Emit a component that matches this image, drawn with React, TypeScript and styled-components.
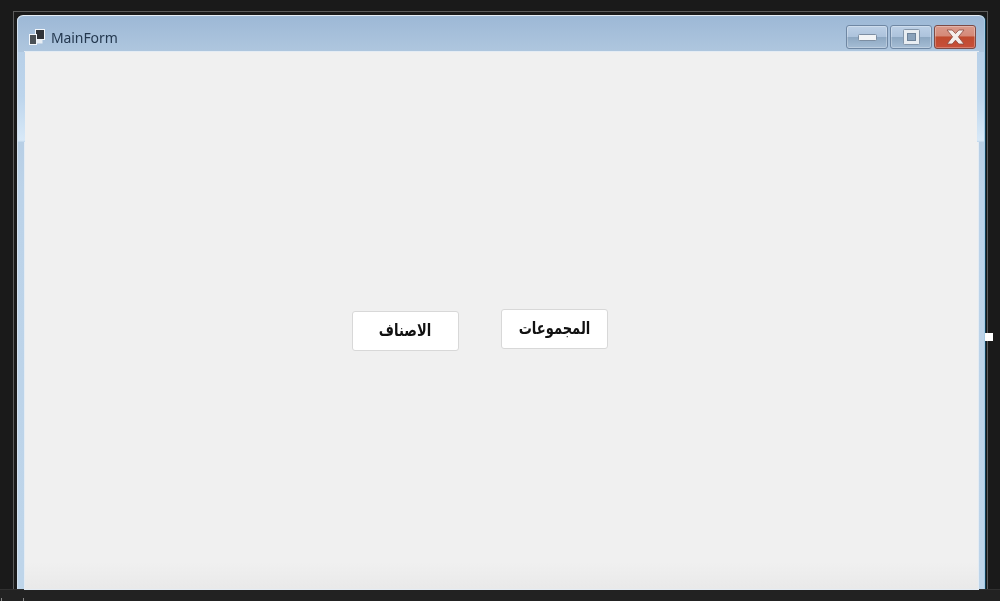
import React from 'react';
import styled, { createGlobalStyle } from 'styled-components';

const GlobalStyle = createGlobalStyle`
  html, body {
    margin: 0;
    padding: 0;
    background: #1a1a1a;
  }
  #root {
    width: 1000px;
    height: 601px;
  }
`;

const Stage = styled.div`
  position: relative;
  box-sizing: border-box;
  display: flex;
  flex-direction: column;
  width: 1000px;
  height: 601px;
  padding-top: 11px;
  background: #1a1a1a;
  overflow: hidden;
  filter: blur(0.35px);
`;

const DesignerOutline = styled.div`
  box-sizing: border-box;
  flex-shrink: 0;
  width: 975px;
  height: 578px;
  margin-left: 13px;
  padding: 3px 3px 0 3px;
  border: 1px solid #5c5c5c;
  border-bottom: none;
`;

const Window = styled.div`
  position: relative;
  box-sizing: border-box;
  display: flex;
  flex-direction: column;
  width: 968px;
  height: 574px;
  padding: 0 7px 0 8px;
  border-top: 1px solid #e6edf4;
  border-radius: 6px 6px 0 0;
  background: linear-gradient(180deg, #9db8d6 0%, #aec6de 6%, #bcd3e9 30%, #bed5ea 100%);
  box-shadow: inset 1px 0 0 #d3e1ef, inset -1px 0 0 #a8cbe4, 1px 0 0 #0d3c55;
`;

const SideGlow = styled.div<{ $side: 'left' | 'right' }>`
  position: absolute;
  top: 36px;
  ${props => props.$side}: 1px;
  width: 7px;
  height: 90px;
  background: linear-gradient(180deg, #b8d0e8 0%, #bdd5ec 50%, #d8e9f8 98%, #bed5ea 100%);
`;

const TitleBar = styled.div`
  display: flex;
  align-items: flex-start;
  justify-content: space-between;
  height: 36px;
  flex-shrink: 0;
`;

const TitleGroup = styled.div`
  display: flex;
  align-items: center;
  gap: 5px;
  padding: 10px 0 0 4px;
`;

const TitleText = styled.span`
  font-family: 'Noto Sans', sans-serif;
  font-size: 14px;
  letter-spacing: -0.1px;
  line-height: 23px;
  color: #24384f;
`;

const WindowButtons = styled.div`
  display: flex;
  gap: 2px;
  margin: 9px 2px 0 0;
`;

const CaptionButton = styled.div<{ $close?: boolean }>`
  box-sizing: border-box;
  display: flex;
  align-items: center;
  justify-content: center;
  width: 42px;
  height: 24px;
  border: 1px solid ${props => (props.$close ? '#7d4a45' : '#6f87a3')};
  border-radius: 3px;
  background: ${props =>
    props.$close
      ? 'linear-gradient(180deg, #d99a8c 0%, #d58a78 45%, #bf4a2e 50%, #c8503a 100%)'
      : 'linear-gradient(180deg, #bdd0e6 0%, #adc3dc 48%, #8ea8c2 52%, #a5bdd5 100%)'};
  box-shadow: inset 0 0 0 1px rgba(255, 255, 255, 0.28);
`;

const ClientArea = styled.div`
  flex: 1;
  display: flex;
  justify-content: center;
  align-items: flex-start;
  gap: 42px;
  padding: 257px 44px 0 0;
  background: linear-gradient(180deg, #f0f0f0 0%, #f0f0f0 95%, #e9e9e9 100%);
  box-shadow: 0 0 0 1px #e4ecf4;
`;

const FormButton = styled.button<{ $drop?: number }>`
  box-sizing: border-box;
  width: 107px;
  height: 40px;
  margin-top: ${props => props.$drop ?? 0}px;
  padding: 0 0 2px;
  border: 1px solid #d8d8d8;
  border-radius: 3px;
  background: #ffffff;
  font-family: 'DejaVu Sans', sans-serif;
  font-size: 17px;
  font-weight: 700;
  color: #111111;
`;

const ButtonLabel = styled.span`
  display: inline-block;
  transform: scaleX(0.77);
`;

const BottomStrip = styled.div`
  flex: 1;
  display: flex;
  align-items: flex-end;
  gap: 21px;
  padding-left: 1px;
  border-top: 1px solid #303030;
  background: #222222;
`;

const BottomTick = styled.div`
  width: 1px;
  height: 3px;
  background: #8a8a8a;
`;

const ResizeHandle = styled.div`
  position: absolute;
  left: 985px;
  top: 333px;
  width: 8px;
  height: 8px;
  background: #ffffff;
`;

const FormIcon = () => (
  <svg width="17" height="17" viewBox="0 0 17 17">
    <rect x="6.5" y="0.5" width="9" height="10" fill="#2f3338" stroke="#f2f6fa" />
    <rect x="0.5" y="5.5" width="7" height="10" fill="#4a5055" stroke="#f2f6fa" />
    <rect x="7.5" y="10.5" width="6" height="4" fill="#e8eef4" />
  </svg>
);

const MinimizeIcon = () => (
  <svg width="19" height="7" viewBox="0 0 19 7">
    <rect x="0.5" y="0.5" width="18" height="6" rx="1" fill="#f2f4f6" stroke="#7d8ea2" />
  </svg>
);

const MaximizeIcon = () => (
  <svg width="17" height="16" viewBox="0 0 17 16">
    <rect x="0.5" y="0.5" width="16" height="15" rx="1" fill="#e8edf2" stroke="#8496aa" />
    <rect x="4.5" y="4.5" width="8" height="7" fill="#8aa2bb" stroke="#6d8299" />
  </svg>
);

const CloseIcon = () => (
  <svg width="19" height="16" viewBox="0 0 19 16">
    <path
      d="M1 1h5.2l3.3 3.6L12.8 1H18l-5.6 6.8L18 15h-5.2l-3.3-3.8L6.2 15H1l5.6-7.2z"
      fill="#f4eeec"
      stroke="#8a4a40"
      strokeWidth="0.8"
    />
  </svg>
);

export default function App() {
  return (
    <>
      <GlobalStyle />
      <Stage>
        <DesignerOutline>
          <Window>
            <SideGlow $side="left" />
            <SideGlow $side="right" />
            <TitleBar>
              <TitleGroup>
                <FormIcon />
                <TitleText>MainForm</TitleText>
              </TitleGroup>
              <WindowButtons>
                <CaptionButton>
                  <MinimizeIcon />
                </CaptionButton>
                <CaptionButton>
                  <MaximizeIcon />
                </CaptionButton>
                <CaptionButton $close>
                  <CloseIcon />
                </CaptionButton>
              </WindowButtons>
            </TitleBar>
            <ClientArea>
              <FormButton $drop={2} dir="rtl">
                <ButtonLabel>الاصناف</ButtonLabel>
              </FormButton>
              <FormButton dir="rtl">
                <ButtonLabel>المجموعات</ButtonLabel>
              </FormButton>
            </ClientArea>
          </Window>
        </DesignerOutline>
        <BottomStrip>
          <BottomTick />
          <BottomTick />
        </BottomStrip>
        <ResizeHandle />
      </Stage>
    </>
  );
}
